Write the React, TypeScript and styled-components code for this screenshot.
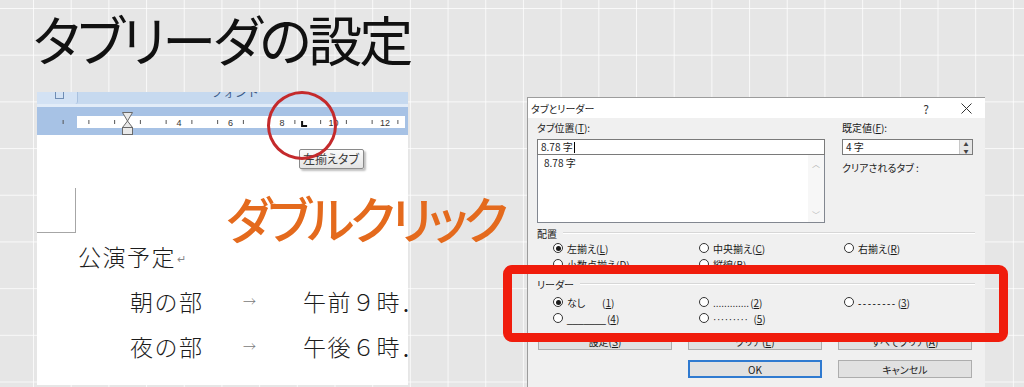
import styled, { createGlobalStyle } from "styled-components";

const GlobalStyle = createGlobalStyle`
  html, body {
    margin: 0;
    padding: 0;
  }
  body {
    background: #e6e6e6;
    font-family: "Noto Sans CJK JP", "Noto Sans", sans-serif;
  }
`;

// ruler scale: where 0 sits inside the ruler svg, and one character width
const ORIGIN = 39;
const UNIT = 25.75;

const Slide = styled.div`
  position: relative;
  width: 1024px;
  height: 387px;
  overflow: hidden;
  display: flex;
  flex-direction: column;
  background-color: #e6e6e6;
  background-image:
    linear-gradient(to right, rgba(255, 255, 255, 0.75) 1px, transparent 1px),
    linear-gradient(to bottom, rgba(255, 255, 255, 0.75) 1px, transparent 1px);
  background-size: 37.7px 46.7px;
  background-position: 33px 8px;
`;

const Title = styled.h1`
  margin: 0;
  height: 92px;
  box-sizing: border-box;
  padding: 9px 0 0 33px;
  font-family: "Noto Sans CJK JP", sans-serif;
  font-weight: 400;
  font-size: 54px;
  line-height: 60px;
  letter-spacing: -3px;
  color: #111;
  font-feature-settings: "palt";
  white-space: nowrap;
`;

const Stage = styled.div`
  display: flex;
  align-items: flex-start;
`;

/* ---------- Word screenshot ---------- */

const WordShot = styled.div`
  position: relative;
  margin-left: 37px;
  width: 371px;
  height: 293px;
  overflow: hidden;
  background: #fff;
  display: flex;
  flex-direction: column;
`;

const RibbonStrip = styled.div`
  height: 12px;
  display: flex;
  background: #c6d9ef;
`;

const Launcher = styled.div`
  width: 40px;
  display: flex;
  justify-content: center;
  background: #d3e2f4;
  border-right: 1px solid #a9c1df;
  border-radius: 0 0 3px 0;

  span {
    width: 7px;
    height: 6px;
    margin-left: 4px;
    border: 1px solid #6f8db4;
    border-top: none;
  }
`;

const GroupLabel = styled.div`
  flex: 1;
  overflow: hidden;
  text-align: center;
  padding-right: 16px;
  font-size: 12px;
  line-height: 12px;
  color: #3b5a86;

  span {
    display: block;
    margin-top: -6px;
  }
`;

const Band = styled.div<{ $h: number; $tone?: "light" }>`
  height: ${(p) => p.$h}px;
  background: ${(p) => (p.$tone === "light" ? "#e2ecf8" : "#a7c2e5")};
`;

const RulerRow = styled.div`
  height: 12px;

  svg {
    display: block;
  }
`;

const IndentMarker = styled.svg`
  position: absolute;
  left: 84px;
  top: 20px;
`;

const Tooltip = styled.div`
  position: absolute;
  left: 262px;
  top: 57px;
  padding: 1px 4px 2px 3px;
  border: 1px solid #8a8a8a;
  border-radius: 2px;
  background: linear-gradient(#fbfbfb, #e4e4e4);
  box-shadow: 2px 2px 2px rgba(0, 0, 0, 0.25);
  font-size: 12px;
  line-height: 15px;
  color: #3a3a3a;
  font-feature-settings: "palt";
  white-space: nowrap;
`;

const Page = styled.div`
  flex: 1;
  display: flex;
  flex-direction: column;
  font-family: "Noto Sans CJK JP", sans-serif;
  font-weight: 300;
  font-size: 23px;
  color: #1c1c1c;
`;

const MarginMark = styled.div`
  margin-top: 53px;
  width: 38px;
  height: 44px;
  border-right: 1px solid #a6a6a6;
  border-bottom: 1px solid #a6a6a6;
`;

const Line = styled.div<{ $indent: number }>`
  height: 45px;
  display: flex;
  align-items: center;
  padding-left: ${(p) => p.$indent}px;
  white-space: nowrap;
  letter-spacing: 1.5px;
`;

const Cell = styled.span<{ $w?: number }>`
  display: inline-block;
  width: ${(p) => (p.$w ? `${p.$w}px` : "auto")};
  flex-shrink: 0;
`;

const TabArrow = styled(Cell)`
  font-size: 13px;
  color: #7a7a7a;
  letter-spacing: 0;
`;

const ReturnMark = styled.span`
  font-size: 11px;
  color: #888;
  margin-left: 1px;
  align-self: flex-end;
  margin-bottom: 12px;
`;

/* ---------- Tabs dialog ---------- */

const Dialog = styled.section`
  margin: 5px 0 0 119px;
  width: 458px;
  height: 290px;
  box-sizing: border-box;
  background: #f0f0f0;
  border-left: 1px solid #9c9c9c;
  border-top: 1px solid #9c9c9c;
  display: flex;
  flex-direction: column;
  font-family: "Noto Sans CJK JP", sans-serif;
  font-size: 10px;
  color: #1b1b1b;
  font-feature-settings: "palt";
`;

const TitleBar = styled.div`
  height: 20px;
  display: flex;
  align-items: center;
  justify-content: space-between;
  padding: 0 13px 0 3px;
  background: #fff;
  font-size: 10px;
`;

const TitleButtons = styled.div`
  display: flex;
  align-items: center;
  gap: 32px;
  font-size: 12px;
  color: #333;
`;

const DialogBody = styled.div`
  flex: 1;
  padding: 2px 10px 0 9px;
  display: flex;
  flex-direction: column;
`;

const TopGrid = styled.div`
  display: grid;
  grid-template-columns: 288px 131px;
  column-gap: 17px;
`;

const Field = styled.div`
  display: flex;
  flex-direction: column;
`;

const Label = styled.div`
  height: 16px;
  line-height: 16px;
  margin-bottom: 3px;
`;

const TextBox = styled.div`
  height: 16px;
  box-sizing: border-box;
  padding-left: 3px;
  border: 1px solid #7a7a7a;
  background: #fff;
  line-height: 14px;
  display: flex;
  align-items: center;
`;

const Caret = styled.span`
  width: 1px;
  height: 11px;
  margin-left: 1px;
  background: #000;
`;

const ListBox = styled.div`
  height: 68px;
  box-sizing: border-box;
  border: 1px solid #828790;
  border-top: none;
  background: #fff;
  display: flex;
`;

const ListItems = styled.div`
  flex: 1;
  padding: 2px 0 0 6px;
  line-height: 12px;
`;

const ScrollBar = styled.div`
  width: 16px;
  display: flex;
  flex-direction: column;
  justify-content: space-between;
  align-items: center;
  padding: 5px 0 3px;
  background: #f7f7f7;
  color: #b5b5b5;
  font-size: 8px;
  line-height: 8px;
`;

const SpinBox = styled(TextBox)`
  justify-content: space-between;
`;

const SpinButtons = styled.div`
  width: 12px;
  height: 14px;
  display: flex;
  flex-direction: column;
  border-left: 1px solid #c8c8c8;
  background: #e6e6e6;

  span {
    flex: 1;
    display: flex;
    align-items: center;
    justify-content: center;
    font-size: 5px;
    line-height: 5px;
    color: #444;
  }
`;

const Note = styled.div`
  margin-top: 6px;
  height: 14px;
  line-height: 14px;
`;

const GroupHeader = styled.div<{ $top: number }>`
  margin-top: ${(p) => p.$top}px;
  height: 14px;
  display: flex;
  align-items: center;
  gap: 6px;
  white-space: nowrap;

  &::after {
    content: "";
    flex: 1;
    height: 0;
    border-top: 1px solid #d7d7d7;
    border-bottom: 1px solid #fff;
  }
`;

const RadioGrid = styled.div<{ $top?: number }>`
  margin-top: ${(p) => p.$top ?? 0}px;
  display: grid;
  grid-template-columns: 146px 145px 1fr;
  grid-auto-rows: 16px;
  padding-left: 16px;
`;

const RadioItem = styled.label`
  display: flex;
  align-items: center;
  gap: 4px;
  white-space: nowrap;
`;

const RadioDot = styled.span<{ $on?: boolean }>`
  width: 10px;
  height: 10px;
  flex-shrink: 0;
  box-sizing: border-box;
  border-radius: 50%;
  border: 1px solid #333;
  background: #fff;
  display: flex;
  align-items: center;
  justify-content: center;

  &::after {
    content: "";
    width: 5px;
    height: 5px;
    border-radius: 50%;
    background: ${(p) => (p.$on ? "#1a1a1a" : "transparent")};
  }
`;

const Key = styled.span`
  text-decoration: underline;
`;

const Leader = styled.span<{ $spacing?: number; $gap?: number }>`
  font-family: "Liberation Sans", sans-serif;
  letter-spacing: ${(p) => p.$spacing ?? 0}px;
  margin-right: ${(p) => p.$gap ?? 1}px;
`;

const ButtonRow = styled.div<{ $top: number; $h: number }>`
  margin-top: ${(p) => p.$top}px;
  display: grid;
  grid-template-columns: repeat(3, 134px);
  column-gap: 16px;
  padding-left: 1px;
  height: ${(p) => p.$h}px;
`;

const PushButton = styled.div<{ $col?: number; $default?: boolean }>`
  grid-column: ${(p) => p.$col ?? "auto"};
  box-sizing: border-box;
  border: 1px solid ${(p) => (p.$default ? "#2f7ad0" : "#adadad")};
  box-shadow: ${(p) => (p.$default ? "inset 0 0 0 1px #2f7ad0" : "none")};
  background: #e1e1e1;
  display: flex;
  align-items: center;
  justify-content: center;
`;

/* ---------- annotations lying over the slide ---------- */

const Callout = styled.div`
  position: absolute;
  left: 226px;
  top: 192px;
  font-family: "Noto Sans CJK JP", sans-serif;
  font-weight: 500;
  font-size: 50px;
  line-height: 50px;
  letter-spacing: -4px;
  color: #e46a1d;
  font-feature-settings: "palt";
  white-space: nowrap;
`;

const RedCircle = styled.div`
  position: absolute;
  left: 267px;
  top: 91px;
  width: 70px;
  height: 69px;
  box-sizing: border-box;
  border: 3px solid #c42a2c;
  border-radius: 50%;
`;

const RedFrame = styled.div`
  position: absolute;
  left: 503px;
  top: 265px;
  width: 505px;
  height: 77px;
  box-sizing: border-box;
  border: 9px solid #f01c0c;
  border-radius: 9px;
`;

function Ruler() {
  const ticks = Array.from({ length: 14 }, (_, i) => ORIGIN + (i - 0.5) * UNIT);
  const numbers = [4, 6, 8, 10, 12];
  const tabX = ORIGIN + 8.78 * UNIT;
  return (
    <svg width="371" height="12" viewBox="0 0 371 12">
      <rect x="0" y="0" width="371" height="12" fill="#a7c2e5" />
      <rect x="40" y="0" width="328" height="12" fill="#fff" />
      {ticks.map((x) => (
        <line key={x} x1={x} x2={x} y1="4" y2="8" stroke="#555" strokeWidth="1" />
      ))}
      {numbers.map((n) => (
        <text
          key={n}
          x={ORIGIN + n * UNIT}
          y="9.5"
          textAnchor="middle"
          fontSize="9"
          fontFamily="Liberation Sans, sans-serif"
          fill="#333"
        >
          {n}
        </text>
      ))}
      <path d={`M${tabX} 5 V10 H${tabX + 5}`} stroke="#111" strokeWidth="2" fill="none" />
    </svg>
  );
}

function Radio({ on, children }: { on?: boolean; children: React.ReactNode }) {
  return (
    <RadioItem>
      <RadioDot $on={on} />
      <span>{children}</span>
    </RadioItem>
  );
}

export default function App() {
  return (
    <>
      <GlobalStyle />
      <Slide>
        <Title>タブリーダの設定</Title>
        <Stage>
          <WordShot>
            <RibbonStrip>
              <Launcher>
                <span />
              </Launcher>
              <GroupLabel>
                <span>フォント</span>
              </GroupLabel>
            </RibbonStrip>
            <Band $h={3} $tone="light" />
            <Band $h={9} />
            <RulerRow>
              <Ruler />
            </RulerRow>
            <Band $h={7} />
            <Page>
              <MarginMark />
              <Line $indent={41}>
                公演予定<ReturnMark>↵</ReturnMark>
              </Line>
              <Line $indent={93}>
                <Cell $w={113}>朝の部</Cell>
                <TabArrow $w={60}>→</TabArrow>
                <Cell>午前９時．</Cell>
              </Line>
              <Line $indent={93}>
                <Cell $w={113}>夜の部</Cell>
                <TabArrow $w={60}>→</TabArrow>
                <Cell>午後６時．</Cell>
              </Line>
            </Page>
            <IndentMarker width="13" height="24" viewBox="0 0 13 24">
              <path d="M1.5 0.5 H11.5 L6.5 9 Z" fill="#e9e9e9" stroke="#6a6a6a" />
              <path d="M6.5 9 L11.5 15.5 H1.5 Z" fill="#e9e9e9" stroke="#6a6a6a" />
              <rect x="1.5" y="15.5" width="10" height="7" fill="#e9e9e9" stroke="#6a6a6a" />
            </IndentMarker>
            <Tooltip>左揃えタブ</Tooltip>
          </WordShot>

          <Dialog>
            <TitleBar>
              <span>タブとリーダー</span>
              <TitleButtons>
                <span>?</span>
                <svg width="11" height="11" viewBox="0 0 11 11">
                  <path d="M0.5 0.5 L10.5 10.5 M10.5 0.5 L0.5 10.5" stroke="#333" strokeWidth="1" />
                </svg>
              </TitleButtons>
            </TitleBar>
            <DialogBody>
              <TopGrid>
                <Field>
                  <Label>
                    タブ位置(<Key>T</Key>):
                  </Label>
                  <TextBox>
                    8.78 字<Caret />
                  </TextBox>
                  <ListBox>
                    <ListItems>8.78 字</ListItems>
                    <ScrollBar>
                      <span>︿</span>
                      <span>﹀</span>
                    </ScrollBar>
                  </ListBox>
                </Field>
                <Field>
                  <Label>
                    既定値(<Key>F</Key>):
                  </Label>
                  <SpinBox>
                    <span>4 字</span>
                    <SpinButtons>
                      <span>▲</span>
                      <span>▼</span>
                    </SpinButtons>
                  </SpinBox>
                  <Note>クリアされるタブ :</Note>
                </Field>
              </TopGrid>

              <GroupHeader $top={3}>配置</GroupHeader>
              <RadioGrid>
                <Radio on>
                  左揃え(<Key>L</Key>)
                </Radio>
                <Radio>
                  中央揃え(<Key>C</Key>)
                </Radio>
                <Radio>
                  右揃え(<Key>R</Key>)
                </Radio>
                <Radio>
                  小数点揃え(<Key>D</Key>)
                </Radio>
                <Radio>
                  縦線(<Key>B</Key>)
                </Radio>
              </RadioGrid>

              <GroupHeader $top={5}>リーダー</GroupHeader>
              <RadioGrid $top={3}>
                <Radio on>
                  なし<Leader $gap={14}> </Leader>(<Key>1</Key>)
                </Radio>
                <Radio>
                  <Leader>.............</Leader>(<Key>2</Key>)
                </Radio>
                <Radio>
                  <Leader $spacing={1.5}>--------</Leader>(<Key>3</Key>)
                </Radio>
                <Radio>
                  <Leader>_______</Leader>(<Key>4</Key>)
                </Radio>
                <Radio>
                  <Leader $spacing={0.6} $gap={5}>
                    ·········
                  </Leader>
                  (<Key>5</Key>)
                </Radio>
              </RadioGrid>

              <ButtonRow $top={7} $h={17}>
                <PushButton>
                  設定(<Key>S</Key>)
                </PushButton>
                <PushButton>
                  クリア(<Key>E</Key>)
                </PushButton>
                <PushButton>
                  すべてクリア(<Key>A</Key>)
                </PushButton>
              </ButtonRow>
              <ButtonRow $top={10} $h={18}>
                <PushButton $col={2} $default>
                  OK
                </PushButton>
                <PushButton $col={3}>キャンセル</PushButton>
              </ButtonRow>
            </DialogBody>
          </Dialog>
        </Stage>

        <Callout>ダブルクリック</Callout>
        <RedCircle />
        <RedFrame />
      </Slide>
    </>
  );
}
